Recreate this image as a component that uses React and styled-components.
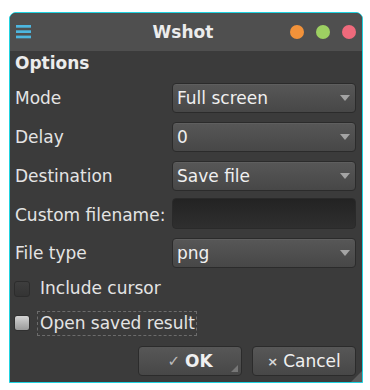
import React from "react";
import styled, { createGlobalStyle } from "styled-components";

const GlobalStyle = createGlobalStyle`
  body {
    margin: 0;
    background: #ffffff;
    font-family: "DejaVu Sans", "Liberation Sans", sans-serif;
  }
`;

const Window = styled.div`
  position: relative;
  margin: 12px 0 0 9px;
  width: 352px;
  height: 369px;
  border: 1px solid #1fd3e0;
  border-radius: 7px 7px 0 0;
  background: #3b3b3b;
  display: flex;
  flex-direction: column;
  overflow: hidden;
`;

const TitleBar = styled.div`
  height: 38px;
  flex-shrink: 0;
  background: #4f4f4f;
  display: grid;
  grid-template-columns: 1fr auto 1fr;
  align-items: center;
  padding: 0 6px;
`;

const Title = styled.div`
  font-weight: bold;
  font-size: 17px;
  color: #ececec;
  padding-right: 6px;
`;

const Dots = styled.div`
  display: flex;
  justify-content: flex-end;
  gap: 12px;
`;

const Dot = styled.span`
  width: 14px;
  height: 14px;
  border-radius: 50%;
  background: ${(p) => p.color};
`;

const Content = styled.div`
  display: flex;
  flex-direction: column;
  padding: 1px 6px 0 5px;
`;

const Heading = styled.div`
  font-weight: bold;
  font-size: 17px;
  line-height: 22px;
  color: #ececec;
`;

const Form = styled.div`
  display: grid;
  grid-template-columns: 1fr 184px;
  row-gap: 9px;
  margin-top: 9px;
  align-items: center;
`;

const Label = styled.div`
  font-size: 17px;
  color: #e4e4e4;
  white-space: nowrap;
`;

const Combo = styled.div`
  height: 28px;
  border: 1px solid #2b2b2b;
  border-radius: 4px;
  background: linear-gradient(#575757, #474747);
  box-shadow: inset 0 1px 0 rgba(255, 255, 255, 0.05);
  display: flex;
  align-items: center;
  justify-content: space-between;
  padding: 0 5px 0 4px;
  font-size: 17px;
  color: #f0f0f0;
`;

const Arrow = styled.span`
  width: 0;
  height: 0;
  border-left: 5px solid transparent;
  border-right: 5px solid transparent;
  border-top: 6px solid #a4a4a4;
`;

const Entry = styled.div`
  height: 29px;
  border: 1px solid #2a2a2a;
  border-radius: 4px;
  background: linear-gradient(#232323, #2f2f2f);
  margin-top: -2px;
`;

const CheckRow = styled.div`
  display: flex;
  align-items: center;
  gap: 7px;
  margin-top: ${(p) => p.top}px;
  height: ${(p) => p.h}px;
`;

const Box = styled.span`
  width: 14px;
  height: 14px;
  margin-left: -1px;
  border: 1px solid ${(p) => (p.on ? "#303030" : "#2c2c2c")};
  border-radius: 3px;
  background: ${(p) =>
    p.on ? "linear-gradient(#d4d4d4, #9a9a9a)" : "linear-gradient(#3e3e3e, #343434)"};
`;

const CheckLabel = styled.span`
  font-size: 17px;
  color: #e4e4e4;
  padding: 1px 1px 2px 2px;
  border: 1px dashed ${(p) => (p.focus ? "#6c6c6c" : "transparent")};
`;

const Buttons = styled.div`
  display: flex;
  justify-content: flex-end;
  gap: 10px;
  margin-top: 10px;
`;

const Button = styled.div`
  position: relative;
  width: 102px;
  height: 28px;
  border: 1px solid #2b2b2b;
  border-radius: 4px;
  background: linear-gradient(#575757, #474747);
  display: flex;
  align-items: center;
  justify-content: center;
  gap: 5px;
  font-size: 17px;
  color: #f0f0f0;
  font-weight: ${(p) => (p.primary ? "bold" : "normal")};
`;

const Glyph = styled.span`
  font-size: ${(p) => p.size}px;
  font-weight: ${(p) => p.weight};
  color: ${(p) => p.color};
`;

const Corner = styled.span`
  position: absolute;
  right: 3px;
  bottom: 3px;
  width: 0;
  height: 0;
  border-left: 7px solid transparent;
  border-bottom: 7px solid #777777;
`;

const Grip = styled.span`
  position: absolute;
  right: 0;
  bottom: 0;
  width: 0;
  height: 0;
  border-left: 11px solid transparent;
  border-bottom: 11px solid #5c5c5c;
`;

const Menu = () => (
  <svg width="15" height="14" viewBox="0 0 15 14">
    <rect x="0" y="0" width="15" height="2.7" fill="#4db7e0" />
    <rect x="0" y="5.3" width="15" height="2.7" fill="#4db7e0" />
    <rect x="0" y="10.6" width="15" height="2.7" fill="#4db7e0" />
  </svg>
);

const rows = [
  ["Mode", "Full screen"],
  ["Delay", "0"],
  ["Destination", "Save file"],
  ["Custom filename:", null],
  ["File type", "png"],
];

export default function App() {
  return (
    <>
      <GlobalStyle />
      <Window>
        <TitleBar>
          <Menu />
          <Title>Wshot</Title>
          <Dots>
            <Dot color="#f2923a" />
            <Dot color="#9dd062" />
            <Dot color="#ef6a7c" />
          </Dots>
        </TitleBar>
        <Content>
          <Heading>Options</Heading>
          <Form>
            {rows.map(([label, value]) => (
              <React.Fragment key={label}>
                <Label>{label}</Label>
                {value === null ? (
                  <Entry />
                ) : (
                  <Combo>
                    <span>{value}</span>
                    <Arrow />
                  </Combo>
                )}
              </React.Fragment>
            ))}
          </Form>
          <CheckRow top={9} h={23}>
            <Box />
            <CheckLabel>Include cursor</CheckLabel>
          </CheckRow>
          <CheckRow top={10} h={26}>
            <Box on />
            <CheckLabel focus>Open saved result</CheckLabel>
          </CheckRow>
          <Buttons>
            <Button primary>
              <Glyph size={15} weight="normal" color="#bdbdbd">✓</Glyph>
              OK
              <Corner />
            </Button>
            <Button>
              <Glyph size={13} weight="bold" color="#d8d8d8">×</Glyph>
              Cancel
            </Button>
          </Buttons>
        </Content>
        <Grip />
      </Window>
    </>
  );
}
